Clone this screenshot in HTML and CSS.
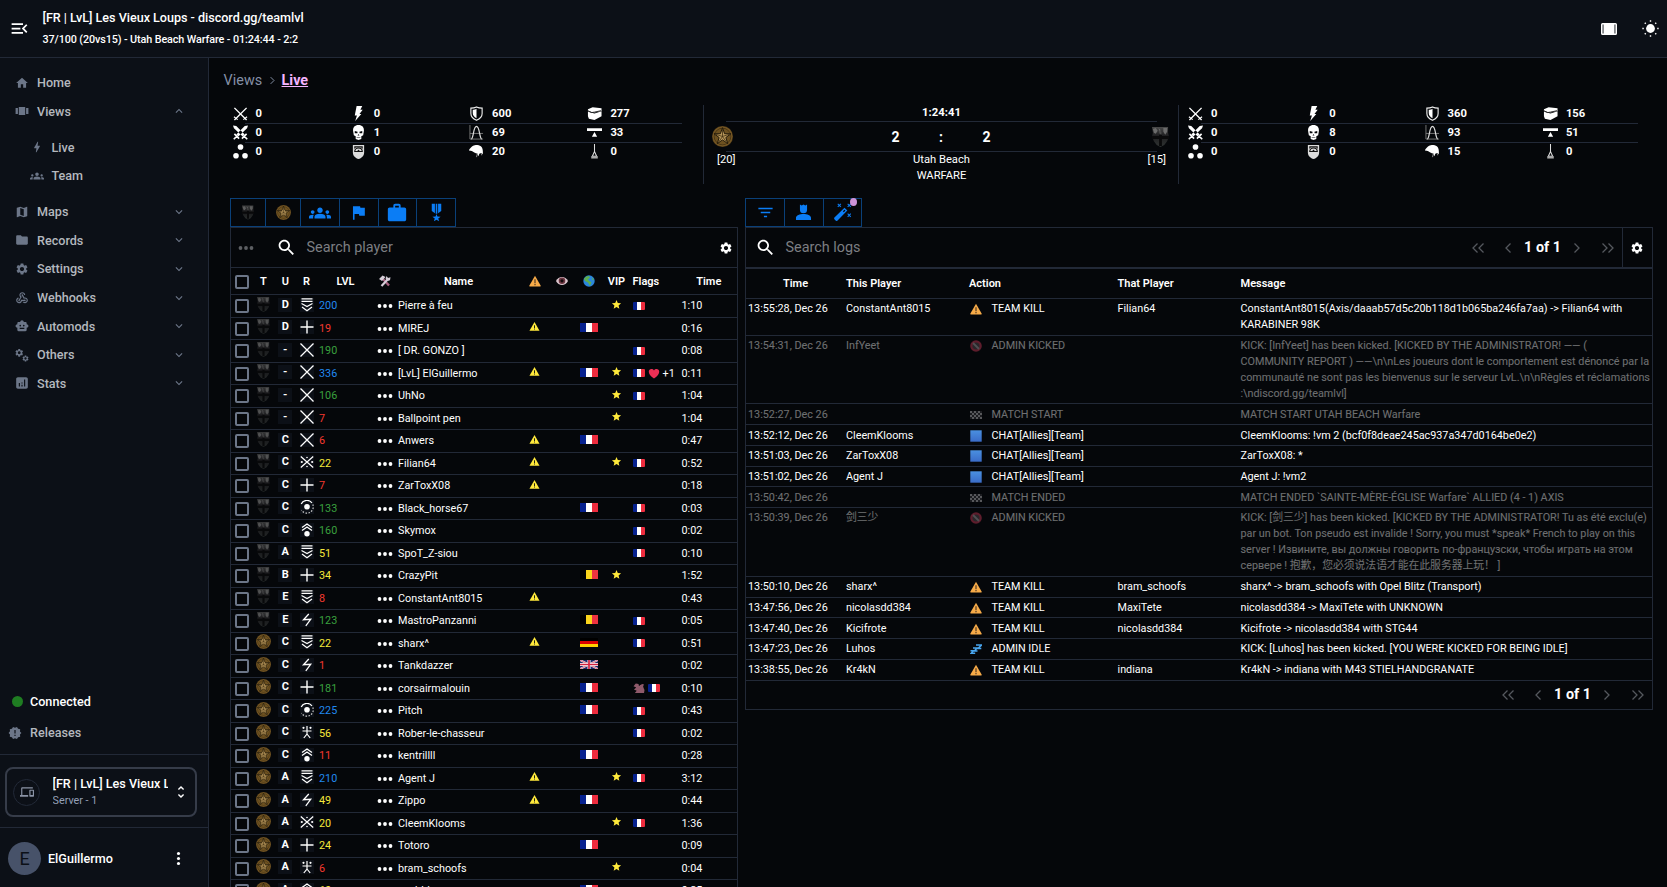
FILE: index.html
```html
<!DOCTYPE html>
<html lang="en">
<head>
<meta charset="utf-8">
<title>Live</title>
<link rel="stylesheet" href="styles.css">
</head>
<body>
<svg class="defs" aria-hidden="true">
  <defs>
    <radialGradient id="gold"><stop offset="0" stop-color="#a8853f"/><stop offset=".8" stop-color="#8b672b"/><stop offset="1" stop-color="#5a421a"/></radialGradient>
    <linearGradient id="steel" x2="0" y2="1"><stop offset="0" stop-color="#4a4a4a"/><stop offset=".45" stop-color="#1d1d1f"/><stop offset="1" stop-color="#303433"/></linearGradient>
    <linearGradient id="chatblue" x2="0" y2="1"><stop offset="0" stop-color="#4a90e0"/><stop offset="1" stop-color="#3a6cc8"/></linearGradient>
  </defs>
  <symbol id="menu" viewBox="0 0 24 24"><path d="M3 18h13v-2H3v2zm0-5h10v-2H3v2zm0-7v2h13V6H3zm18 9.59L17.42 12 21 8.41 19.59 7l-5 5 5 5L21 15.59z"/></symbol>
  <symbol id="home" viewBox="0 0 24 24"><path d="M10 20v-6h4v6h5v-8h3L12 3 2 12h3v8z"/></symbol>
  <symbol id="carousel" viewBox="0 0 24 24"><path d="M1 7h4v10H1zM6.5 19h11V5h-11zM19 7h4v10h-4z"/></symbol>
  <symbol id="bolt" viewBox="0 0 24 24"><path d="M11 21h-1l1-7H7.5c-.58 0-.57-.32-.38-.66C8.48 10.94 10.42 7.54 13 3h1l-1 7h3.5c.49 0 .56.33.47.51C12.96 17.55 11 21 11 21z"/></symbol>
  <symbol id="groups" viewBox="0 0 24 24"><path d="M12 12.75c1.63 0 3.07.39 4.24.9 1.08.48 1.76 1.56 1.76 2.73V18H6v-1.61c0-1.18.68-2.26 1.76-2.73 1.17-.52 2.61-.91 4.24-.91zM4 13c1.1 0 2-.9 2-2s-.9-2-2-2-2 .9-2 2 .9 2 2 2zm1.13 1.1c-.37-.06-.74-.1-1.13-.1-.99 0-1.93.21-2.78.58C.48 14.9 0 15.62 0 16.43V18h4.5v-1.61c0-.83.23-1.61.63-2.29zM20 13c1.1 0 2-.9 2-2s-.9-2-2-2-2 .9-2 2 .9 2 2 2zm4 3.43c0-.81-.48-1.53-1.22-1.85-.85-.37-1.79-.58-2.78-.58-.39 0-.76.04-1.13.1.4.68.63 1.46.63 2.29V18H24v-1.57zM12 6c1.66 0 3 1.34 3 3s-1.34 3-3 3-3-1.34-3-3 1.34-3 3-3z"/></symbol>
  <symbol id="map" viewBox="0 0 24 24"><path fill-rule="evenodd" d="M20.5 3l-.16.03L15 5.1 9 3 3.36 4.9c-.21.07-.36.25-.36.48V20.5c0 .28.22.5.5.5l.16-.03L9 18.9l6 2.1 5.64-1.9c.21-.07.36-.25.36-.48V3.5c0-.28-.22-.5-.5-.5zM15 19l-6-2.110V5l6 2.110V19z"/></symbol>
  <symbol id="folder" viewBox="0 0 24 24"><path d="M10 4H4c-1.1 0-1.99.9-1.99 2L2 18c0 1.1.9 2 2 2h16c1.1 0 2-.9 2-2V8c0-1.1-.9-2-2-2h-8l-2-2z"/></symbol>
  <symbol id="gear" viewBox="0 0 24 24"><path d="M19.14 12.94c.04-.3.06-.61.06-.94 0-.32-.02-.64-.07-.94l2.03-1.58c.18-.14.23-.41.12-.61l-1.92-3.32c-.12-.22-.37-.29-.59-.22l-2.39.96c-.5-.38-1.03-.7-1.62-.94l-.36-2.54c-.04-.24-.24-.41-.48-.41h-3.84c-.24 0-.43.17-.47.41l-.36 2.54c-.59.24-1.13.57-1.62.94l-2.39-.96c-.22-.08-.47 0-.59.22L2.74 8.87c-.12.21-.08.47.12.61l2.03 1.58c-.05.3-.09.63-.09.94s.02.64.07.94l-2.03 1.58c-.18.14-.23.41-.12.61l1.92 3.32c.12.22.37.29.59.22l2.39-.96c.5.38 1.03.7 1.62.94l.36 2.54c.05.24.24.41.48.41h3.84c.24 0 .44-.17.47-.41l.36-2.54c.59-.24 1.13-.56 1.62-.94l2.39.96c.22.08.47 0 .59-.22l1.92-3.32c.12-.22.07-.47-.12-.61l-2.01-1.58zM12 15.6c-1.98 0-3.6-1.62-3.6-3.6s1.62-3.6 3.6-3.6 3.6 1.62 3.6 3.6-1.62 3.6-3.6 3.6z"/></symbol>
  <symbol id="webhook" viewBox="0 0 24 24"><path d="M10 15h5.88c.27-.31.67-.5 1.12-.5.83 0 1.5.67 1.5 1.5s-.67 1.5-1.5 1.5c-.44 0-.84-.19-1.12-.5H11.9c-.46 2.28-2.48 4-4.9 4-2.76 0-5-2.24-5-5 0-2.42 1.72-4.44 4-4.9v2.07c-1.16.41-2 1.53-2 2.83 0 1.65 1.35 3 3 3s3-1.35 3-3v-1zm2.5-11c1.65 0 3 1.35 3 3h2c0-2.76-2.24-5-5-5s-5 2.24-5 5c0 1.43.6 2.71 1.55 3.62l-2.35 3.9c-.68.14-1.2.75-1.2 1.48 0 .83.67 1.5 1.5 1.5s1.5-.67 1.5-1.5c0-.16-.02-.31-.07-.45l3.38-5.63C10.49 9.61 9.5 8.42 9.5 7c0-1.65 1.35-3 3-3zm4.5 9c-.64 0-1.23.2-1.72.54l-3.05-5.07C11.53 8.35 11 7.74 11 7c0-.83.67-1.5 1.5-1.5S14 6.17 14 7c0 .15-.02.29-.06.43l2.19 3.65c.28-.05.57-.08.87-.08 2.76 0 5 2.24 5 5s-2.24 5-5 5c-1.85 0-3.47-1.01-4.33-2.5h2.67c.48.32 1.05.5 1.66.5 1.65 0 3-1.35 3-3s-1.35-3-3-3z"/></symbol>
  <symbol id="robot" viewBox="0 0 24 24"><path d="M20 9V7c0-1.1-.9-2-2-2h-3c0-1.66-1.34-3-3-3S9 3.34 9 5H6c-1.1 0-2 .9-2 2v2c-1.66 0-3 1.34-3 3s1.34 3 3 3v4c0 1.1.9 2 2 2h12c1.1 0 2-.9 2-2v-4c1.66 0 3-1.34 3-3s-1.34-3-3-3zM7.5 11.5c0-.83.67-1.5 1.5-1.5s1.5.67 1.5 1.5S9.83 13 9 13s-1.5-.67-1.5-1.5zM16 17H8v-2h8v2zm-1-4c-.83 0-1.5-.67-1.5-1.5S14.17 10 15 10s1.5.67 1.5 1.5S15.83 13 15 13z"/></symbol>
  <symbol id="gears" viewBox="0 0 24 24"><use href="#gear" x="-1" y="0" width="16.5" height="16.5"/><use href="#gear" x="11.500" y="11.500" width="13" height="13"/></symbol>
  <symbol id="chart" viewBox="0 0 24 24"><path fill-rule="evenodd" d="M19 2H5C3.300 2 2 3.300 2 5v14c0 1.700 1.300 3 3 3h14c1.700 0 3-1.300 3-3V5c0-1.700-1.300-3-3-3zM8.500 18h-2v-6h2zm4.500 0h-2v-3h2zm0-5h-2v-2h2zm4.500 5h-2V6h2z"/></symbol>
  <symbol id="release" viewBox="0 0 24 24"><path d="M23 12l-2.440-2.780.34-3.680-3.610-.82-1.890-3.180L12 3 8.600 1.540 6.710 4.720l-3.610.81.34 3.680L1 12l2.440 2.780-.34 3.690 3.610.82 1.890 3.180L12 21l3.400 1.460 1.890-3.180 3.610-.82-.34-3.680L23 12zm-10 5h-2v-2h2v2zm0-4h-2V7h2v6z"/></symbol>
  <symbol id="devices" viewBox="0 0 24 24"><path d="M4 6h18V4H4c-1.100 0-2 .9-2 2v11H0v3h14v-3H4V6zm19 2h-6c-.55 0-1 .45-1 1v10c0 .55.45 1 1 1h6c.55 0 1-.45 1-1V9c0-.55-.45-1-1-1zm-1 9h-4v-7h4v7z"/></symbol>
  <symbol id="unfold" viewBox="0 0 24 24"><path d="M12 5.830L15.170 9l1.410-1.410L12 3 7.410 7.590 8.830 9 12 5.830zm0 12.340L8.830 15l-1.410 1.410L12 21l4.590-4.590L15.170 15 12 18.170z"/></symbol>
  <symbol id="more" viewBox="0 0 24 24"><circle cx="12" cy="5" r="2.200"/><circle cx="12" cy="12" r="2.200"/><circle cx="12" cy="19" r="2.200"/></symbol>
  <symbol id="dots" viewBox="0 0 16 6"><circle cx="2.500" cy="3" r="1.900"/><circle cx="8" cy="3" r="1.900"/><circle cx="13.500" cy="3" r="1.900"/></symbol>
  <symbol id="down" viewBox="0 0 24 24"><path d="M16.590 8.590L12 13.170 7.410 8.590 6 10l6 6 6-6z"/></symbol>
  <symbol id="up" viewBox="0 0 24 24"><path d="M12 8l-6 6 1.410 1.410L12 10.830l4.590 4.580L18 14z"/></symbol>
  <symbol id="search" viewBox="0 0 24 24"><path d="M15.500 14h-.79l-.28-.27C15.410 12.590 16 11.110 16 9.500 16 5.910 13.090 3 9.500 3S3 5.910 3 9.500 5.910 16 9.500 16c1.610 0 3.090-.59 4.230-1.570l.27.28v.79l5 4.990L20.490 19l-4.990-5zm-6 0C7.010 14 5 11.990 5 9.500S7.010 5 9.500 5 14 7.010 14 9.500 11.990 14 9.500 14z"/></symbol>
  <symbol id="flag" viewBox="0 0 24 24"><path d="M14.400 6L14 4H5v17h2v-7h5.600l.4 2h7V6z"/></symbol>
  <symbol id="case" viewBox="0 0 24 24"><path d="M20 6h-4V4c0-1.110-.89-2-2-2h-4c-1.110 0-2 .89-2 2v2H4c-1.110 0-1.990.89-1.990 2L2 19c0 1.110.89 2 2 2h16c1.110 0 2-.89 2-2V8c0-1.110-.89-2-2-2zm-6 0h-4V4h4v2z"/></symbol>
  <symbol id="medal" viewBox="0 0 24 24"><path d="M6 1h4v12L6 10zM11 1h2v12.500h-2zM14 1h4v9l-4 3zM12 14l1.200 3.200 4 .1-3 2.200 1.100 3.500-3.300-2-3.300 2 1.100-3.500-3-2.200 4-.1z"/></symbol>
  <symbol id="filter" viewBox="0 0 24 24"><path d="M10 18h4v-2h-4v2zM3 6v2h18V6H3zm3 7h12v-2H6v2z"/></symbol>
  <symbol id="person" viewBox="0 0 24 24"><path d="M7.500 2l2.200 1L12 2l2.300 1 2.200-1v6.500a4.500 4.500 0 0 1-9 0zM2.500 21.500V19c0-3.500 5-5 9.500-5s9.500 1.500 9.500 5v2.500z"/></symbol>
  <symbol id="wand" viewBox="0 0 24 24"><path d="M14.500 6l3.600 3.600L5.500 22.500c-1.200.9-5-2.800-4-4zm0 2.400l-2 2 1.200 1.200 2-2z" fill-rule="evenodd"/><path d="M6 1l4 4m0-4l-4 4M18.500 1l4 4m0-4l-4 4M18.500 13.500l4 4m0-4l-4 4" stroke="currentColor" stroke-width="1.300"/></symbol>
  <symbol id="left" viewBox="0 0 12 12"><path d="M8.500 1.500L4 6l4.500 4.500" fill="none" stroke="currentColor" stroke-width="1.300"/></symbol>
  <symbol id="right" viewBox="0 0 12 12"><path d="M3.500 1.500L8 6l-4.500 4.500" fill="none" stroke="currentColor" stroke-width="1.300"/></symbol>
  <symbol id="first" viewBox="0 0 14 12"><path d="M6.500 1.500L2 6l4.500 4.500M12.500 1.500L8 6l4.500 4.500" fill="none" stroke="currentColor" stroke-width="1.300"/></symbol>
  <symbol id="last" viewBox="0 0 14 12"><path d="M1.500 1.500L6 6l-4.500 4.500M7.500 1.500L12 6l-4.500 4.500" fill="none" stroke="currentColor" stroke-width="1.300"/></symbol>
  <symbol id="sun" viewBox="0 0 24 24"><circle cx="12" cy="12" r="6.200"/><path d="M11 .5h2v2h-2zM11 21.500h2v2h-2zM.5 11h2v2h-2zM21.500 11h2v2h-2zM3.200 4.600l1.400-1.400L6 4.600 4.600 6zM18 4.600l1.400-1.400 1.400 1.400L19.400 6zM3.200 19.400L4.600 18 6 19.400l-1.400 1.400zM18 19.400l1.400-1.400 1.400 1.400-1.400 1.400z"/></symbol>
  <symbol id="width" viewBox="0 0 16 12"><path fill-rule="evenodd" d="M1.500 0h13A1.500 1.500 0 0 1 16 1.500v9a1.500 1.500 0 0 1-1.500 1.500h-13A1.500 1.500 0 0 1 0 10.500v-9A1.500 1.500 0 0 1 1.500 0zM1.600 1.500v9h.9v-9zM13.500 1.500v9h.9v-9z"/></symbol>

  <symbol id="allies" viewBox="0 0 22 22"><circle cx="11" cy="11" r="11" fill="url(#gold)"/><circle cx="11" cy="11" r="8.800" fill="#6d5120" stroke="#3b2b10" stroke-width=".8"/><path d="M11 1.800l2.200 6.300h6.700l-5.400 4 2 6.400-5.500-3.900-5.500 3.900 2-6.400-5.400-4h6.700z" fill="#b8975a" stroke="#1f1708" stroke-width="1"/><path d="M11 11V3M11 11l7.500-2.500M11 11l4.500 6.500M11 11l-4.500 6.500M11 11L3.500 8.500" stroke="#3b2b10" stroke-width=".8"/></symbol>
  <symbol id="axis" viewBox="0 0 18 21"><path d="M0 0h17v6l1 4-2 5-3 4-4 2-4-2-3-4-2-5 1-4z" fill="url(#steel)"/><path d="M1 2l3-1 2 3-2 3-2-1zM7 1l2 2-1 3M12 1h4v4l-2 3-2-3z" fill="#6b6b6b"/><path d="M7 3l3 2v3L8 7z" fill="#4b4b4b"/><path d="M0 9.500h18v3H0zM7.500 8h3v12h-3z" fill="#0a0a0b"/></symbol>

  <symbol id="s-inf" viewBox="0 0 16 16"><path d="M1.500 2L14.500 15M14.500 2L1.500 15" stroke="#fff" stroke-width="1.500"/><path d="M1 11.500l4 3M11 14.500l4-3" stroke="#fff" stroke-width="1.200"/></symbol>
  <symbol id="s-sword" viewBox="0 0 16 16"><path d="M0 .5l3.500.5L12.500 10l-2.200 2.200L1 3.500zM16 .5l-3.500.5L3.500 10l2.200 2.200L15 3.500z" fill="#fff"/><path d="M1.500 9.500l5 5M14.500 9.500l-5 5M.8 15.200l3.400-3.400M15.200 15.200l-3.400-3.400" stroke="#fff" stroke-width="1.700"/></symbol>
  <symbol id="s-three" viewBox="0 0 16 16"><g fill="#fff"><circle cx="8" cy="3.200" r="3"/><circle cx="3.200" cy="12.500" r="3"/><circle cx="12.800" cy="12.500" r="3"/></g></symbol>
  <symbol id="s-bolt" viewBox="0 0 16 16"><path d="M6 0h6l-2 4h2.500L9 8.500h2L4.500 16l1.800-6H4z" fill="#fff"/></symbol>
  <symbol id="s-skull" viewBox="0 0 16 16"><path fill="#fff" fill-rule="evenodd" d="M8 0c4 0 6 2.500 5.800 6L13 11l-2 1v3l-3 1-3-1v-3l-2-1-.8-5C2 2.500 4 0 8 0zM4 6.500v2.300h2.800l.2-1.600zM12 6.500l-3 .7.200 1.600H12zM8 9.500l-1 1.800h2zM6 13h4v.7H6z"/></symbol>
  <symbol id="s-guard" viewBox="0 0 16 16"><path d="M2 1h12v8c0 4-3 6-6 7-3-1-6-3-6-7z" fill="#ddd"/><path d="M3.500 2.300h9v3L11 3.700H5L3.500 5.300z" fill="#111"/><path d="M4 8c0-5 8-5 8 0z" fill="none" stroke="#111" stroke-width="1.200"/><circle cx="8" cy="7" r="1" fill="#111"/></symbol>
  <symbol id="s-shield" viewBox="0 0 16 16"><path d="M8 1c2 1 4 1.300 6 1.300V8c0 4-3 6-6 7.300C5 14 2 12 2 8V2.300C4 2.300 6 2 8 1z" fill="none" stroke="#eee" stroke-width="1.200"/><path d="M8 3v10c-2.500-1-4-3-4-5.500V4c1.500 0 3-.3 4-1z" fill="#fff"/></symbol>
  <symbol id="s-curve" viewBox="0 0 16 16"><path d="M1 0v15h14M1 9h14" fill="none" stroke="#777"/><path d="M2.500 15C5 14 4.500 1.500 8 1.500S11 14 13.500 15" fill="none" stroke="#ddd" stroke-width="1.300"/></symbol>
  <symbol id="s-helmet" viewBox="0 0 16 16"><path d="M0 6.500C2.500 2 6 .8 9 1c4 .4 6 3 5.800 7.500V11L13 9.500l-2 1-1 2.500-1.500-3C5 9.800 5 7.500 0 7z" fill="#fff"/><path d="M13.500 10v2M9 10l-1 4" stroke="#999"/></symbol>
  <symbol id="s-crate" viewBox="0 0 16 16"><path d="M1 3.500L6 1.200l9.500 1.300v2.800L8 7 1 5.500zM1 6.200l7 1.700 7.500-2.200V11L8 14.800 2 13.500 1 11z" fill="#fff"/><path d="M1 5l4 2 3-.5L15 5" stroke="#222" fill="none" stroke-width="1"/></symbol>
  <symbol id="s-seesaw" viewBox="0 0 16 16"><path d="M0 3.500h16v3H0zM8 7.500l2.800 5H5.200z" fill="#fff"/></symbol>
  <symbol id="s-shovel" viewBox="0 0 16 16"><path d="M8 0v9M8 8l-2.300 5h4.600z" fill="none" stroke="#ddd" stroke-width="1.100"/><path d="M4.500 13h7v2.500h-7z" fill="#aaa"/></symbol>

  <symbol id="r-chev" viewBox="0 0 14 14"><path d="M1.500.8h11M1.500 3.300h11M1.500 5.500L7 8.500l5.500-3M2 9l5 3.700L12 9" fill="none" stroke="#fff" stroke-width="1.300"/></symbol>
  <symbol id="r-plus" viewBox="0 0 14 14"><path d="M7 .5v13M.5 7h13" stroke="#fff" stroke-width="1.400"/></symbol>
  <symbol id="r-x" viewBox="0 0 14 14"><path d="M.5.500l13 13M13.500.5l-13 13" stroke="#fff" stroke-width="1.300"/></symbol>
  <symbol id="r-xdots" viewBox="0 0 14 14"><path d="M.8 1.500l12.400 11M13.200 1.500L.8 12.500" stroke="#fff" stroke-width="1.200"/><g fill="#fff"><circle cx="1.800" cy="7" r="1.100"/><circle cx="12.200" cy="7" r="1.100"/><circle cx="7" cy="2.500" r=".8"/><circle cx="7" cy="11.500" r=".8"/></g></symbol>
  <symbol id="r-target" viewBox="0 0 14 14"><circle cx="7" cy="6.700" r="2.800" fill="#fff"/><path d="M1.200 4A6.300 6.300 0 0 1 12 3" fill="none" stroke="#fff" stroke-width="1.200"/><path d="M12.800 4.500A6.300 6.300 0 0 1 1.500 10" fill="none" stroke="#ccc" stroke-width="1.200" stroke-dasharray="1.500 1.500"/></symbol>
  <symbol id="r-up" viewBox="0 0 14 14"><path d="M2 4.500L7 1l5 3.500M2 7.500L7 4l5 3.500" fill="none" stroke="#fff" stroke-width="1.400"/><circle cx="7" cy="10.800" r="2.700" fill="#fff"/></symbol>
  <symbol id="r-zap" viewBox="0 0 14 14"><path d="M8.800 1L3.500 6.700l7.200-.4L5.800 12.800" fill="none" stroke="#fff" stroke-width="1.300"/></symbol>
  <symbol id="r-man" viewBox="0 0 14 14"><path d="M7 1v8L3.800 13M7 9l3.200 4M2.500 6h9" fill="none" stroke="#fff" stroke-width="1.200"/><circle cx="3.500" cy="2.800" r="1.100" fill="#fff"/><circle cx="10.500" cy="2.800" r="1.100" fill="#fff"/></symbol>

  <symbol id="tri" viewBox="0 0 24 24"><path d="M12 2L1 21h22z" fill="#ffe93b"/><path d="M11 9h2v6h-2zM11 16.500h2v2h-2z" fill="#111"/></symbol>
  <symbol id="warn" viewBox="0 0 24 24"><path d="M12 1.500L.5 21.500q0 1.500 1 1.500h21q1 0 1-1.500z" fill="#f7ab48"/><path d="M10.800 8.500h2.400v8h-2.400zM10.800 18h2.400v2.400h-2.400z" fill="#513a25"/></symbol>
  <symbol id="star" viewBox="0 0 24 24"><path d="M12 17.270L18.180 21l-1.640-7.030L22 9.240l-7.190-.61L12 2 9.190 8.630 2 9.240l5.460 4.730L5.820 21z" fill="#ffe93b"/></symbol>
  <symbol id="tools" viewBox="0 0 12 12"><path d="M3.500 3.500l6.500 7" stroke="#a8607f" stroke-width="2.400"/><path d="M9.500 3.500l-7 7.500" stroke="#d5cdd8" stroke-width="2.200"/><path d="M0 4L3.500.5l3 1.500-3.500 4zM7.500 1l1.500 2 2.500-.8-.5 3-2.500.8-2-2z" fill="#d5cdd8"/></symbol>
  <symbol id="eye" viewBox="0 0 12 12"><path d="M0 6C2.500.8 9.500.8 12 6 9.500 11.200 2.500 11.200 0 6z" fill="#dcc6ce"/><circle cx="6" cy="5.800" r="3.300" fill="#6b3540"/><circle cx="6" cy="5.800" r="1.600" fill="#130a0c"/></symbol>
  <symbol id="globe" viewBox="0 0 12 12"><circle cx="6" cy="6" r="5.700" fill="#2a86dd"/><path d="M1 4Q2.500 1 6 1l1 1.500L5 4.500l1 1.500 2.500 1-1.500 4-2-3.500L2 6z" fill="#5fae4d"/><path d="M9 2l2 3-1.500.5z" fill="#5fae4d"/></symbol>
  <symbol id="heart" viewBox="0 0 12 12"><path d="M6 11.500C2 9 .3 6 .3 4 .3.800 4.500.300 6 2.800 7.500.300 11.700.800 11.700 4c0 2-1.700 5-5.700 7.500z" fill="#ed2f55"/></symbol>
  <symbol id="creature" viewBox="0 0 12 12"><path d="M0 3.500L2.500.5l3 .5L6 3.500 7 2.500 9.500 1l2 .5-1 2 .5 2 1 2-.5 3.500H7L5.500 11H1.500L3.500 8.500.5 7 3 5z" fill="#8f5a6b"/></symbol>
  <symbol id="ban" viewBox="0 0 12 12"><circle cx="6" cy="6" r="4.700" fill="#5b5256" stroke="#d93c5c" stroke-width="2.200"/><path d="M3 3l6 6" stroke="#b8b0b4" stroke-width="1.800"/></symbol>
  <symbol id="check" viewBox="0 0 12 12"><path d="M0 2h12v8H0z" fill="#3b3b40"/><path d="M0 2h2v2H0zM4 2h2v2H4zM8 2h2v2H8zM2 4h2v2H2zM6 4h2v2H6zM10 4h2v2h-2zM0 6h2v2H0zM4 6h2v2H4zM8 6h2v2H8zM2 8h2v2H2zM6 8h2v2H6zM10 8h2v2h-2z" fill="#c8c8cc"/></symbol>
  <symbol id="chat" viewBox="0 0 12 12"><path d="M.3.300h11.400v11.400H.3z" fill="url(#chatblue)"/></symbol>
  <symbol id="zzz" viewBox="0 0 12 12"><path d="M6 2h5.500L8 5.500h3.300M3 5h4L4.500 8H7.500M.5 7.800h3L1.200 10.300h4" fill="none" stroke="#48a5ee" stroke-width="1.600"/></symbol>

  <symbol id="fr" viewBox="0 0 18 9" preserveAspectRatio="none"><path d="M0 0h6v9H0z" fill="#06218f"/><path d="M6 0h6v9H6z" fill="#fff"/><path d="M12 0h6v9h-6z" fill="#ee2c3e"/></symbol>
  <symbol id="be" viewBox="0 0 18 9" preserveAspectRatio="none"><path d="M0 0h6v9H0z" fill="#000"/><path d="M6 0h6v9H6z" fill="#fad41c"/><path d="M12 0h6v9h-6z" fill="#ee3340"/></symbol>
  <symbol id="de" viewBox="0 0 18 9" preserveAspectRatio="none"><path d="M0 0h18v3H0z" fill="#000"/><path d="M0 3h18v3H0z" fill="#d00"/><path d="M0 6h18v3H0z" fill="#ffce00"/></symbol>
  <symbol id="gb" viewBox="0 0 18 9" preserveAspectRatio="none"><path d="M0 0h18v9H0z" fill="#1c2a6b"/><path d="M0 0l18 9M18 0L0 9" stroke="#fff" stroke-width="1.800"/><path d="M0 0l18 9M18 0L0 9" stroke="#d02040" stroke-width=".7"/><path d="M9 0v9M0 4.500h18" stroke="#fff" stroke-width="3"/><path d="M9 0v9M0 4.500h18" stroke="#d02040" stroke-width="1.700"/></symbol>
</svg>

<header class="topbar">
  <svg class="menu-icon"><use href="#menu"/></svg>
  <div class="heading">
    <div class="title">[FR | LvL] Les Vieux Loups - discord.gg/teamlvl</div>
    <div class="subtitle">37/100 (20vs15) - Utah Beach Warfare - 01:24:44 - 2:2</div>
  </div>
  <svg class="width-icon"><use href="#width"/></svg>
  <svg class="sun-icon"><use href="#sun"/></svg>
</header>

<div class="shell">
  <aside class="sidebar">
    <nav class="nav">
      <a class="item"><svg><use href="#home"/></svg><span>Home</span></a>
      <a class="item"><svg><use href="#carousel"/></svg><span>Views</span><svg class="chev"><use href="#up"/></svg></a>
      <div class="sub">
        <a class="item"><svg><use href="#bolt"/></svg><span>Live</span></a>
        <a class="item"><svg><use href="#groups"/></svg><span>Team</span></a>
      </div>
      <a class="item"><svg><use href="#map"/></svg><span>Maps</span><svg class="chev"><use href="#down"/></svg></a>
      <a class="item"><svg><use href="#folder"/></svg><span>Records</span><svg class="chev"><use href="#down"/></svg></a>
      <a class="item"><svg><use href="#gear"/></svg><span>Settings</span><svg class="chev"><use href="#down"/></svg></a>
      <a class="item"><svg><use href="#webhook"/></svg><span>Webhooks</span><svg class="chev"><use href="#down"/></svg></a>
      <a class="item"><svg><use href="#robot"/></svg><span>Automods</span><svg class="chev"><use href="#down"/></svg></a>
      <a class="item"><svg><use href="#gears"/></svg><span>Others</span><svg class="chev"><use href="#down"/></svg></a>
      <a class="item"><svg><use href="#chart"/></svg><span>Stats</span><svg class="chev"><use href="#down"/></svg></a>
    </nav>
    <div class="status"><i class="led"></i><span>Connected</span></div>
    <div class="status releases"><svg><use href="#release"/></svg><span>Releases</span></div>
    <div class="server-wrap">
      <div class="server">
        <div class="server-icon"><svg><use href="#devices"/></svg></div>
        <div class="server-text"><b>[FR | LvL] Les Vieux Loups</b><small>Server - 1</small></div>
        <svg class="unfold"><use href="#unfold"/></svg>
      </div>
    </div>
    <div class="user">
      <div class="avatar">E</div><span>ElGuillermo</span>
      <svg><use href="#more"/></svg>
    </div>
  </aside>

  <main class="main">
    <div class="crumbs"><span>Views</span><svg><use href="#right"/></svg><a>Live</a></div>
    <section class="board">
      <div class="stats" data-stats="0 0 600 277 0 1 69 33 0 0 20 0"></div>
      <div class="score">
        <div class="clock">1:24:41</div>
        <div class="points">
          <svg class="em-allies"><use href="#allies"/></svg>
          <div class="nums"><b>2</b><b>:</b><b>2</b></div>
          <svg class="em-axis"><use href="#axis"/></svg>
        </div>
        <div class="place"><span>[20]</span><div>Utah Beach<br>WARFARE</div><span>[15]</span></div>
      </div>
      <div class="stats" data-stats="0 0 360 156 0 8 93 51 0 0 15 0"></div>
    </section>

    <section class="tables">
      <div class="players">
        <div class="tabs">
          <span class="narrow"><svg class="t-axis"><use href="#axis"/></svg></span>
          <span class="narrow"><svg class="t-allies"><use href="#allies"/></svg></span>
          <span><svg class="t22"><use href="#groups"/></svg></span>
          <span><svg><use href="#flag"/></svg></span>
          <span><svg class="t22"><use href="#case"/></svg></span>
          <span><svg><use href="#medal"/></svg></span>
        </div>
        <div class="panel">
          <div class="searchbar">
            <svg class="ghost-dots"><use href="#dots"/></svg>
            <svg class="search"><use href="#search"/></svg>
            <span class="placeholder">Search player</span>
            <svg class="gear"><use href="#gear"/></svg>
          </div>
          <div class="prow phead">
            <i class="box"></i><b>T</b><b>U</b><b>R</b><b>LVL</b><svg class="e12"><use href="#tools"/></svg><b>Name</b>
            <svg class="e12"><use href="#warn"/></svg><svg class="e12"><use href="#eye"/></svg><svg class="e12"><use href="#globe"/></svg><b>VIP</b><b class="l">Flags</b><b>Time</b>
          </div>
          <div id="players"></div>
        </div>
      </div>

      <div class="logs">
        <div class="tabs">
          <span><svg><use href="#filter"/></svg></span>
          <span><svg><use href="#person"/></svg></span>
          <span class="wand"><svg><use href="#wand"/></svg><i class="badge"></i></span>
        </div>
        <div class="panel">
          <div class="searchbar">
            <svg class="search"><use href="#search"/></svg>
            <span class="placeholder">Search logs</span>
            <div class="pager"><svg class="dbl"><use href="#first"/></svg><svg><use href="#left"/></svg><b>1 of 1</b><svg><use href="#right"/></svg><svg class="dbl"><use href="#last"/></svg></div>
            <div class="gear-cell"><svg class="gear"><use href="#gear"/></svg></div>
          </div>
          <div class="lrow lhead"><b class="c">Time</b><b>This Player</b><b>Action</b><b>That Player</b><b>Message</b></div>
          <div id="logs"></div>
          <div class="pager foot"><svg class="dbl"><use href="#first"/></svg><svg><use href="#left"/></svg><b>1 of 1</b><svg><use href="#right"/></svg><svg class="dbl"><use href="#last"/></svg></div>
        </div>
      </div>
    </section>
  </main>
</div>
<script src="app.js"></script>
</body>
</html>
```
FILE: styles.css
```css
* { box-sizing: border-box; }
body { margin: 0; height: 887px; overflow: hidden; background: #05070a; color: #fff; font-family: Roboto, "Noto Sans CJK SC", sans-serif; font-size: 10.8px; display: flex; flex-direction: column; }
svg { fill: currentColor; display: block; flex: none; }
.defs { position: absolute; width: 0; height: 0; }

.topbar { height: 58px; flex: none; background: #0c1017; border-bottom: 1px solid #222937; display: flex; align-items: center; padding-left: 9px; padding-right: 8px; }
.menu-icon { width: 21px; height: 21px; }
.heading { flex: 1; padding-left: 12.500px; }
.title { font-size: 12.600px; font-weight: 500; line-height: 18px; margin-bottom: 4px; letter-spacing: -0.020px; }
.subtitle { font-size: 10.800px; font-weight: 500; line-height: 17px; letter-spacing: -0.110px; }
.width-icon { width: 16px; height: 12px; margin-right: 25px; }
.sun-icon { width: 17px; height: 17px; }

.shell { flex: 1; display: flex; min-height: 0; }
.sidebar { width: 209px; flex: none; background: #0c1017; border-right: 1px solid #222937; display: flex; flex-direction: column; font-size: 12.600px; font-weight: 500; }
.nav { padding-top: 10.400px; flex: 1; color: #b4b8be; }
.item { display: flex; align-items: center; height: 28.650px; padding: 0 22px 0 15px; }
.item span { flex: 1; padding-left: 8px; }
.item svg { width: 14px; height: 14px; color: #6c7688; }
.sub { padding: 7.200px 0 7.200px 15px; }
.sub .item span { padding-left: 7.500px; }
.status { display: flex; align-items: center; height: 31px; padding-left: 12px; }
.status span { padding-left: 7px; }
.led { width: 11px; height: 11px; border-radius: 50%; background: #1f7d22; }
.releases { padding-left: 8px; color: #b4b8be; height: 37px; padding-bottom: 6px; }
.releases svg { width: 14px; height: 14px; color: #6c7688; }
.releases span { padding-left: 8px; }
.server-wrap { border-top: 1px solid #222937; padding: 12px 11px 10px 5px; }
.server { height: 50px; border: 2px solid #363c49; border-radius: 8px; display: flex; align-items: center; padding-left: 6px; }
.server-icon { width: 27px; height: 27px; border: 1px solid #222937; border-radius: 50%; display: grid; place-items: center; color: #8a93a5; }
.server-icon svg { width: 14px; height: 14px; }
.server-text { margin-left: 12.500px; width: 115px; overflow: hidden; white-space: nowrap; }
.server-text b { display: block; font-weight: 500; line-height: 18px; }
.server-text small { display: block; font-size: 10.800px; font-weight: 400; line-height: 16px; margin-bottom: 1px; color: #94a0b8; }
.unfold { width: 16px; height: 16px; margin-left: 5px; }
.user { height: 60px; border-top: 1px solid #222937; display: flex; align-items: center; padding: 1px 21px 0 8px; }
.avatar { width: 33px; height: 33px; border-radius: 50%; background: #475269; color: #0c1017; font-size: 18px; font-weight: 400; display: grid; place-items: center; }
.user span { flex: 1; padding-left: 7px; }
.user svg { width: 17px; height: 17px; }

.main { flex: 1; min-width: 0; padding: 12px 14px 0 14px; }
.crumbs { display: flex; align-items: center; height: 21px; font-size: 14.400px; color: #8490a6; padding-left: .6px; }
.crumbs svg { width: 9px; height: 9px; margin: 0 5px 0 5.400px; }
.crumbs a { color: #f4b4ff; font-weight: 700; text-decoration: underline; }
.board { display: grid; grid-template-columns: 480px 476px 475px; margin-top: 14px; height: 79px; font-weight: 400; }
.stats { display: grid; grid-template-columns: repeat(4, 118.300px); grid-template-rows: repeat(3, 19px); padding-left: 9.500px; align-content: start; position: relative; }
.stats::before, .stats::after { content: ""; position: absolute; left: 22px; width: 437px; height: 1px; background: #222937; top: 18px; }
.stats::after { top: 37px; }
.stats + .score + .stats { padding-left: 9px; }
.stats div { display: flex; align-items: center; gap: 8px; font-size: 11.200px; font-weight: 700; height: 17px; }
.stats svg { width: 15px; height: 15px; }
.score { border-left: 1px solid #222937; border-right: 1px solid #222937; }
.clock { text-align: center; font-size: 11.300px; font-weight: 700; line-height: 15px; height: 16px; padding-left: 1px; }
.points { display: flex; align-items: center; height: 31px; padding: 0 9px 0 8px; position: relative; }
.points::before, .points::after { content: ""; position: absolute; left: 22px; right: 21px; height: 1px; top: 0; background: #222937; }
.points::after { top: 30px; }
.em-allies { width: 21px; height: 21px; }
.em-axis { width: 17px; height: 20px; }
.nums { flex: 1; display: flex; justify-content: center; font-size: 14px; padding-right: 3px; }
.nums b { width: 45.500px; text-align: center; }
.place { display: grid; grid-template-columns: 60px 1fr 60px; text-align: center; font-size: 11.200px; line-height: 16px; padding: 0 12px 0 13px; }
.place span:first-child { text-align: left; }
.place span:last-child { text-align: right; }

.tables { display: flex; padding-left: 7px; margin-top: 14px; }
.players { width: 508px; margin-right: 7px; }
.logs { width: 908px; }
.tabs { display: flex; height: 29px; width: max-content; border: 1px solid #0a4079; color: #0b7df5; }
.tabs span { width: 38.800px; display: grid; place-items: center; position: relative; }
.tabs span + span { border-left: 1px solid #0a4079; }
.tabs .narrow { width: 35px; }
.tabs .narrow:first-child { width: 34px; }
.tabs svg { width: 19px; height: 19px; }
.tabs .t22 { width: 22px; height: 22px; }
.tabs .t-axis { width: 12px; height: 15px; opacity: .85; }
.tabs .t-allies { width: 15px; height: 15px; }
.logs .tabs span { width: 38.300px; }
.badge { position: absolute; width: 7px; height: 8px; border-radius: 50%; background: #ce93d8; right: 4px; top: -1px; }
.panel { border: 1px solid #222937; }
.searchbar { height: 40px; display: flex; align-items: center; border-bottom: 1px solid #222937; }
.ghost-dots { width: 16px; height: 6px; color: #5d5f63; margin: 1px 22px 0 7px; }
.search { width: 21px; height: 21px; }
.placeholder { flex: 1; font-size: 14.400px; color: #7c7e82; padding-left: 9.500px; }
.gear { width: 14px; height: 14px; margin-right: 4px; }

.prow { display: grid; grid-template-columns: 21.500px 22px 21.500px 21px 57px 22px 125px 27px 27px 27.500px 28px 50px 1fr; height: 22.500px; border-bottom: 1px solid #222937; align-items: center; justify-items: center; font-weight: 400; }
.prow .l { justify-self: start; padding-left: 2px; }
.phead { height: 27px; font-size: 11px; }
.phead b { font-weight: 600; }
.box { width: 14px; height: 14px; border: 2px solid #6c7688; border-radius: 2px; margin: 1px 0 0 0; }
.e12 { width: 12px; height: 12px; }
.team { width: 15px; height: 15px; margin-top: -3px; }
.team.axis { opacity: .75; }
.unit, .rank { width: 14px; height: 14px; background: #0c1017; margin-top: -2px; text-align: center; line-height: 14px; font-weight: 700; font-size: 11px; }
.rank { margin-left: 1px; }
.lvl, .name { justify-self: start; padding-left: 2px; }
.mini-dots { width: 16px; height: 6px; margin-top: 1px; }
.red { color: #f4392f; } .green { color: #3aa13e; } .blue { color: #2189f0; } .yellow { color: #f6e83a; }
.tri { width: 11px; height: 11px; margin-top: -3px; }
.country { width: 18px; height: 9px; margin-top: -2px; }
.star { width: 11px; height: 11px; margin-top: -3px; }
.flags { justify-self: start; display: flex; align-items: center; gap: 3px; padding-left: 2px; }
.flags svg { width: 12px; height: 8px; border-radius: 1px; }
.flags .sq { width: 12px; height: 11px; }
.time { justify-self: start; padding-left: 1px; }

.logs .searchbar { border-bottom-width: 2px; height: 41px; padding-left: 9px; }
.pager { display: flex; align-items: center; font-size: 14.400px; color: #55585e; }
.pager svg { width: 12px; height: 12px; }
.pager .dbl { width: 14px; margin-right: 16.500px; }
.pager b { color: #fff; font-weight: 700; margin: 0 10px 0 10.500px; }
.pager svg + .dbl { margin: 0 7px 0 18px; }
.gear-cell { width: 30px; height: 39px; border-left: 1px solid #222937; display: grid; place-items: center; }
.gear-cell .gear { margin: 0 1px 0 0; }
.lrow { display: grid; grid-template-columns: 98px 123px 22.500px 126px 123px 1fr; border-bottom: 1px solid #222937; padding: 2.350px 2px 1.400px 2px; line-height: 16px; font-weight: 400; }
.lhead { grid-template-columns: 98px 123px 148.500px 123px 1fr; padding: 7px 2px 6px; height: 30px; font-size: 11px; }
.lhead b { font-weight: 600; }
.lhead .c { text-align: center; padding-right: 3px; }
.lrow svg { width: 12px; height: 12px; margin: 2px 0 0 .5px; }
.lrow .msg { white-space: pre; }
.dim > * { opacity: .42; }
.foot { height: 28px; justify-content: flex-end; }
```
FILE: app.js
```javascript
const use = (id, cls) => `<svg class="${cls || ''}"><use href="#${id}"/></svg>`;

const statIcons = ['inf', 'bolt', 'shield', 'crate', 'sword', 'skull', 'curve', 'seesaw', 'three', 'guard', 'helmet', 'shovel'];
document.querySelectorAll('.stats').forEach(el => {
  el.innerHTML = el.dataset.stats.split(' ')
    .map((v, i) => `<div>${use('s-' + statIcons[i])}<span>${v}</span></div>`).join('');
});

// team | unit | role | level | name | warned | country | vip | flags | time
const players = `x|D|chev|200|Pierre à feu|||v|fr|1:10
x|D|plus|19|MIREJ|w|fr|||0:16
x|-|x|190|[ DR. GONZO ]||||fr|0:08
x|-|x|336|[LvL] ElGuillermo|w|fr|v|fr heart +1|0:11
x|-|x|106|UhNo|||v|fr|1:04
x|-|x|7|Ballpoint pen|||v||1:04
x|C|x|6|Anwers|w|fr|||0:47
x|C|xdots|22|Filian64|w||v|fr|0:52
x|C|plus|7|ZarToxX08|w||||0:18
x|C|target|133|Black_horse67||fr||fr|0:03
x|C|up|160|Skymox||||fr|0:02
x|A|chev|51|SpoT_Z-siou||||fr|0:10
x|B|plus|34|CrazyPit||be|v||1:52
x|E|chev|8|ConstantAnt8015|w||||0:43
x|E|zap|123|MastroPanzanni||be||fr|0:05
a|C|chev|22|sharx^|w|de||fr|0:51
a|C|zap|1|Tankdazzer||gb|||0:02
a|C|plus|181|corsairmalouin||fr||creature fr|0:10
a|C|target|225|Pitch||fr||fr|0:43
a|C|man|56|Rober-le-chasseur||||fr|0:02
a|C|up|11|kentrillll||fr|||0:28
a|A|chev|210|Agent J|w||v|fr|3:12
a|A|zap|49|Zippo|w|fr|||0:44
a|A|xdots|20|CleemKlooms|||v|fr|1:36
a|A|plus|24|Totoro||fr|||0:09
a|A|man|6|bram_schoofs|||v||0:04
a|A|up|60|scabbl||fr||fr|0:25`;

const levelColor = n => n < 20 ? 'red' : n < 100 ? 'yellow' : n < 200 ? 'green' : 'blue';
const flagMark = f => f[0] === '+' ? `<span>${f}</span>` : use(f, f.length > 2 ? 'sq' : '');

document.getElementById('players').innerHTML = players.split('\n').map(line => {
  const [team, unit, role, lvl, name, warned, country, vip, flags, time] = line.split('|');
  return `<div class="prow"><i class="box"></i>${team === 'x' ? use('axis', 'team axis') : use('allies', 'team')}
    <span class="unit">${unit}</span>${use('r-' + role, 'rank')}<span class="lvl ${levelColor(+lvl)}">${lvl}</span>
    ${use('dots', 'mini-dots')}<span class="name">${name}</span><span>${warned && use('tri', 'tri')}</span><span></span>
    <span>${country && use(country, 'country')}</span><span>${vip && use('star', 'star')}</span>
    <span class="flags">${flags && flags.split(' ').map(flagMark).join('')}</span><span class="time">${time}</span></div>`;
}).join('');

const kinds = {
  tk: ['warn', 'TEAM KILL'], kick: ['ban', 'ADMIN KICKED', 1], start: ['check', 'MATCH START', 1],
  end: ['check', 'MATCH ENDED', 1], chat: ['chat', 'CHAT[Allies][Team]'], idle: ['zzz', 'ADMIN IDLE']
};
const logs = [
  ['13:55:28', 'ConstantAnt8015', 'tk', 'Filian64', 'ConstantAnt8015(Axis/daaab57d5c20b118d1b065ba246fa7aa) -&gt; Filian64 with\nKARABINER 98K'],
  ['13:54:31', 'InfYeet', 'kick', '', 'KICK: [InfYeet] has been kicked. [KICKED BY THE ADMINISTRATOR! —— (\nCOMMUNITY REPORT ) ——\\n\\nLes joueurs dont le comportement est dénoncé par la\ncommunauté ne sont pas les bienvenus sur le serveur LvL.\\n\\nRègles et réclamations\n:\\ndiscord.gg/teamlvl]'],
  ['13:52:27', '', 'start', '', 'MATCH START UTAH BEACH Warfare'],
  ['13:52:12', 'CleemKlooms', 'chat', '', 'CleemKlooms: !vm 2 (bcf0f8deae245ac937a347d0164be0e2)'],
  ['13:51:03', 'ZarToxX08', 'chat', '', 'ZarToxX08: *'],
  ['13:51:02', 'Agent J', 'chat', '', 'Agent J: !vm2'],
  ['13:50:42', '', 'end', '', 'MATCH ENDED `SAINTE-MÈRE-ÉGLISE Warfare` ALLIED (4 - 1) AXIS'],
  ['13:50:39', '剑三少', 'kick', '', 'KICK: [剑三少] has been kicked. [KICKED BY THE ADMINISTRATOR! Tu as été exclu(e)\npar un bot. Ton pseudo est invalide ! Sorry, you must *speak* French to play on this\nserver ! Извините, вы должны говорить по-французски, чтобы играть на этом\nсервере ! 抱歉，您必须说法语才能在此服务器上玩！ ]'],
  ['13:50:10', 'sharx^', 'tk', 'bram_schoofs', 'sharx^ -&gt; bram_schoofs with Opel Blitz (Transport)'],
  ['13:47:56', 'nicolasdd384', 'tk', 'MaxiTete', 'nicolasdd384 -&gt; MaxiTete with UNKNOWN'],
  ['13:47:40', 'Kicifrote', 'tk', 'nicolasdd384', 'Kicifrote -&gt; nicolasdd384 with STG44'],
  ['13:47:23', 'Luhos', 'idle', '', 'KICK: [Luhos] has been kicked. [YOU WERE KICKED FOR BEING IDLE]'],
  ['13:38:55', 'Kr4kN', 'tk', 'indiana', 'Kr4kN -&gt; indiana with M43 STIELHANDGRANATE']
];
document.getElementById('logs').innerHTML = logs.map(([time, who, kind, whom, msg]) => {
  const [icon, label, dim] = kinds[kind];
  return `<div class="lrow ${dim ? 'dim' : ''}"><span>${time}, Dec 26</span><span>${who}</span>${use(icon)}<span>${label}</span><span>${whom}</span><span class="msg">${msg}</span></div>`;
}).join('');
```
